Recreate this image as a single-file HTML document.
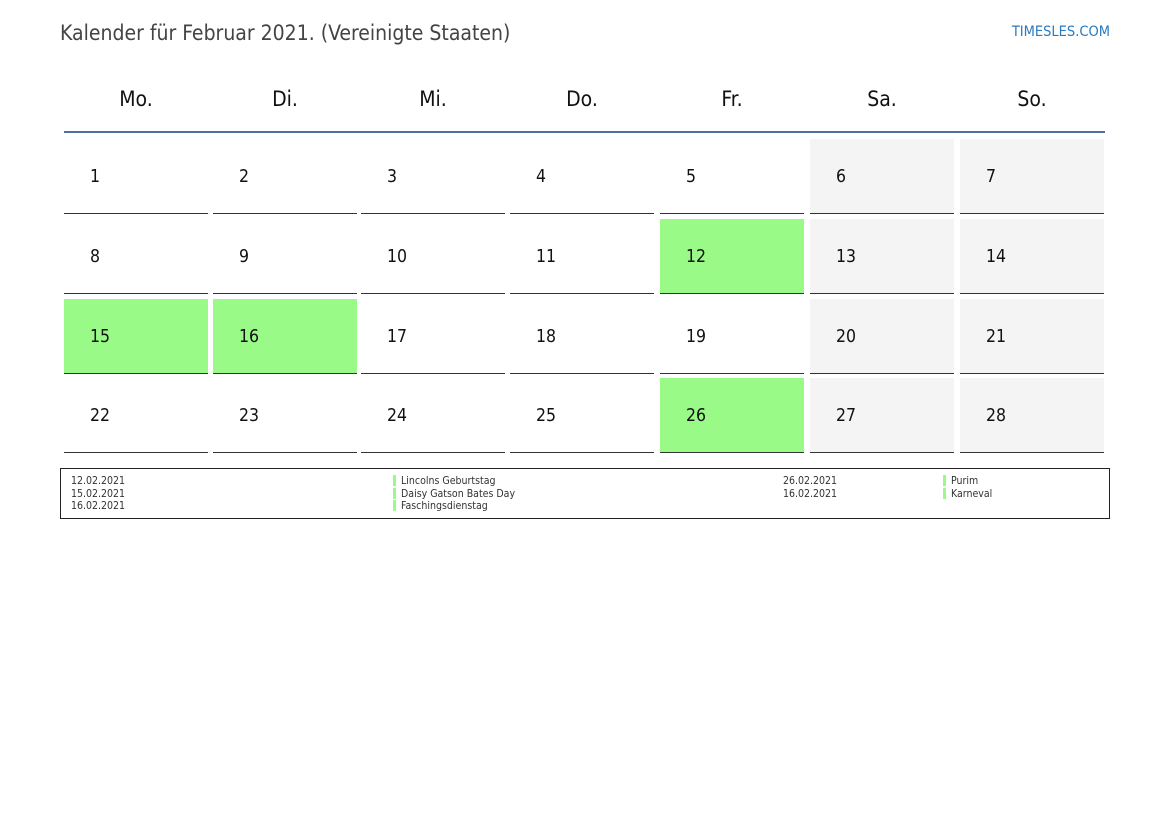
<!DOCTYPE html>
<html><head><meta charset="utf-8"><style>
body{margin:0;width:1169px;height:827px;background:#fff;font-family:"DejaVu Sans Condensed","DejaVu Sans","Liberation Sans",sans-serif;font-stretch:condensed;position:relative;overflow:hidden}
.a{position:absolute}
.t{left:60px;top:21px;font-size:21px;color:#444}
.l{right:59px;top:24px;font-size:14.5px;color:#2a7ac0}
.h{top:87px;width:144px;text-align:center;font-size:21px;color:#111}
.c{width:144px;height:75px;border-bottom:1px solid #333;font-size:17.5px;color:#111;box-sizing:border-box}
.c span{position:absolute;left:26px;top:28px}
.g{background:#9afa88}.w{background:#f4f4f4}
.s{font-size:10.5px;color:#333;line-height:12.5px}
.b{width:3px;height:11px;background:#9afa88}
</style></head><body>
<div class="a t">Kalender für Februar 2021. (Vereinigte Staaten)</div>
<div class="a l">TIMESLES.COM</div>
<div class="a" style="left:64px;top:131px;width:1041px;height:2px;background:#4f6f9c"></div>
<div id="g"></div>
<div class="a" style="left:60px;top:468px;width:1048px;height:49px;border:1px solid #222"></div>
<div class="a s" style="left:71px;top:475px">12.02.2021<br>15.02.2021<br>16.02.2021</div>
<div class="a b" style="left:393px;top:475px"></div><div class="a b" style="left:393px;top:488px"></div><div class="a b" style="left:393px;top:500px"></div>
<div class="a s" style="left:401px;top:475px">Lincolns Geburtstag<br>Daisy Gatson Bates Day<br>Faschingsdienstag</div>
<div class="a s" style="left:783px;top:475px">26.02.2021<br>16.02.2021</div>
<div class="a b" style="left:943px;top:475px"></div><div class="a b" style="left:943px;top:488px"></div>
<div class="a s" style="left:951px;top:475px">Purim<br>Karneval</div>
<script>
var xs=[64,213,361,510,660,810,960],ys=[139,219,299,378],d=["Mo.","Di.","Mi.","Do.","Fr.","Sa.","So."],g=[12,15,16,26],h="";
for(var i=0;i<7;i++)h+='<div class="a h" style="left:'+xs[i]+'px">'+d[i]+'</div>';
for(var r=0;r<4;r++)for(var i=0;i<7;i++){var n=r*7+i+1;var cl=g.indexOf(n)>=0?" g":(i>4?" w":"");
h+='<div class="a c'+cl+'" style="left:'+xs[i]+'px;top:'+ys[r]+'px"><span>'+n+'</span></div>';}
document.getElementById("g").innerHTML=h;
</script>
</body></html>
